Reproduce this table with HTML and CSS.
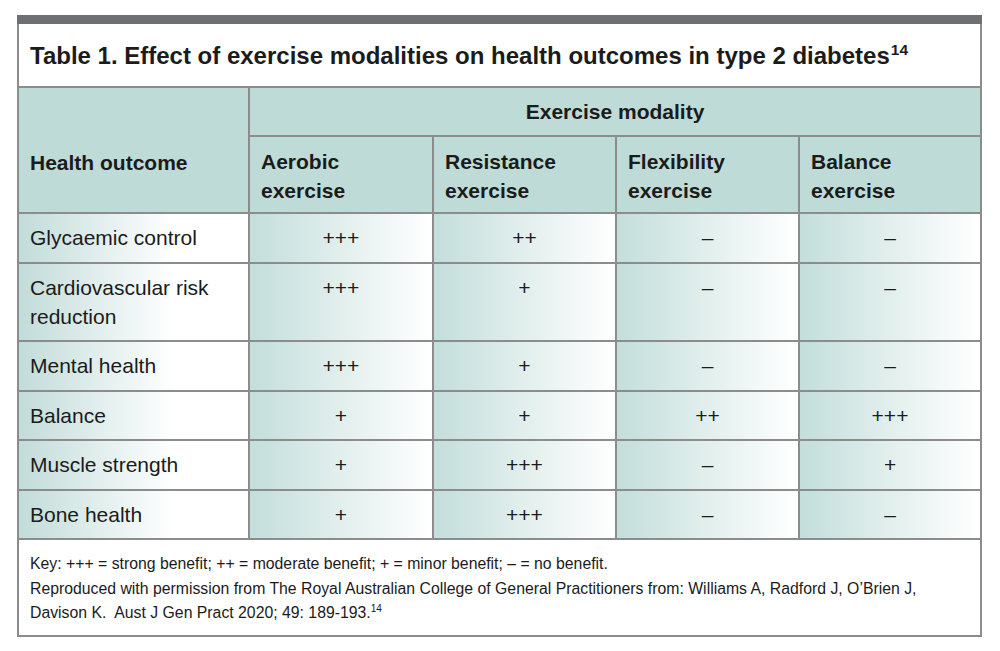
FILE: index.html
```html
<!DOCTYPE html>
<html lang="en">
<head>
<meta charset="utf-8">
<title>Table 1</title>
<link rel="stylesheet" href="styles.css">
</head>
<body>
<div class="figure">
  <div class="topbar"></div>
  <div class="box">
    <h1 class="title">Table 1. Effect of exercise modalities on health outcomes in type 2 diabetes<sup>14</sup></h1>
    <table class="grid">
      <colgroup>
        <col class="c1"><col class="c2"><col class="c3"><col class="c4"><col class="c5">
      </colgroup>
      <thead>
        <tr class="h1row">
          <th rowspan="2" class="outcome-head">Health outcome</th>
          <th colspan="4" class="group-head">Exercise modality</th>
        </tr>
        <tr class="h2row">
          <th>Aerobic<br>exercise</th>
          <th>Resistance<br>exercise</th>
          <th>Flexibility<br>exercise</th>
          <th>Balance<br>exercise</th>
        </tr>
      </thead>
      <tbody>
        <tr><td class="label">Glycaemic control</td><td>+++</td><td>++</td><td>–</td><td>–</td></tr>
        <tr><td class="label">Cardiovascular risk<br>reduction</td><td>+++</td><td>+</td><td>–</td><td>–</td></tr>
        <tr><td class="label">Mental health</td><td>+++</td><td>+</td><td>–</td><td>–</td></tr>
        <tr><td class="label">Balance</td><td>+</td><td>+</td><td>++</td><td>+++</td></tr>
        <tr><td class="label">Muscle strength</td><td>+</td><td>+++</td><td>–</td><td>+</td></tr>
        <tr><td class="label">Bone health</td><td>+</td><td>+++</td><td>–</td><td>–</td></tr>
      </tbody>
    </table>
    <div class="notes">
      <p>Key: +++ = strong benefit; ++ = moderate benefit; + = minor benefit; – = no benefit.</p>
      <p>Reproduced with permission from The Royal Australian College of General Practitioners from: Williams A, Radford J, O’Brien J,<br>Davison K.&nbsp; Aust J Gen Pract 2020; 49: 189-193.<span class="ref">14</span></p>
    </div>
  </div>
</div>
</body>
</html>
```

FILE: styles.css
```css
html, body {
  margin: 0;
  padding: 0;
  background: #ffffff;
}

body {
  font-family: "Liberation Sans", Arial, sans-serif;
  color: #1b1b1b;
}

.figure {
  width: 965px;
  margin: 15px 0 0 17px;
}

.topbar {
  height: 9px;
  background: #6e6f72;
}

.box {
  border: 2px solid #8c8c8c;
  border-top: none;
}

.title {
  margin: 0;
  height: 64px;
  box-sizing: border-box;
  padding: 18px 11px 0;
  font-size: 24px;
  line-height: 28px;
  font-weight: bold;
  border-bottom: 2px solid #8c8c8c;
}

.title sup {
  font-size: 15.5px;
  line-height: 0;
  vertical-align: 9px;
  margin-left: 1px;
}

.grid {
  width: 961px;
  border-collapse: collapse;
  border-style: hidden;
  table-layout: fixed;
}

.c1 { width: 230px; }
.c2 { width: 184px; }
.c3 { width: 183px; }
.c4 { width: 183px; }
.c5 { width: 181px; }

.grid th,
.grid td {
  border: 2px solid #8c8c8c;
  font-size: 21px;
  line-height: 29px;
  vertical-align: top;
  padding: 9px 11px 9.5px;
}

.grid th {
  background: #bedbd7;
  font-weight: bold;
  text-align: left;
}

.grid .group-head {
  text-align: center;
  padding: 9px 11px 9px;
}

.grid .h2row th {
  padding: 10px 11px 7px;
}

.grid .outcome-head {
  padding-top: 60px;
}

.grid td {
  text-align: center;
  background: linear-gradient(to right, #c3dedb 0%, #e2efed 50%, #ffffff 100%);
}

.grid td.label {
  text-align: left;
  background: linear-gradient(to right, #c2dcd9 0%, #e6f1f0 40%, #ffffff 68%);
}

.notes {
  border-top: 2px solid #8c8c8c;
  padding: 12px 11px 7px;
  font-size: 15.8px;
  line-height: 24.5px;
}

.notes p {
  margin: 0;
}

.notes .ref {
  font-size: 10px;
  position: relative;
  top: -6px;
}
```
